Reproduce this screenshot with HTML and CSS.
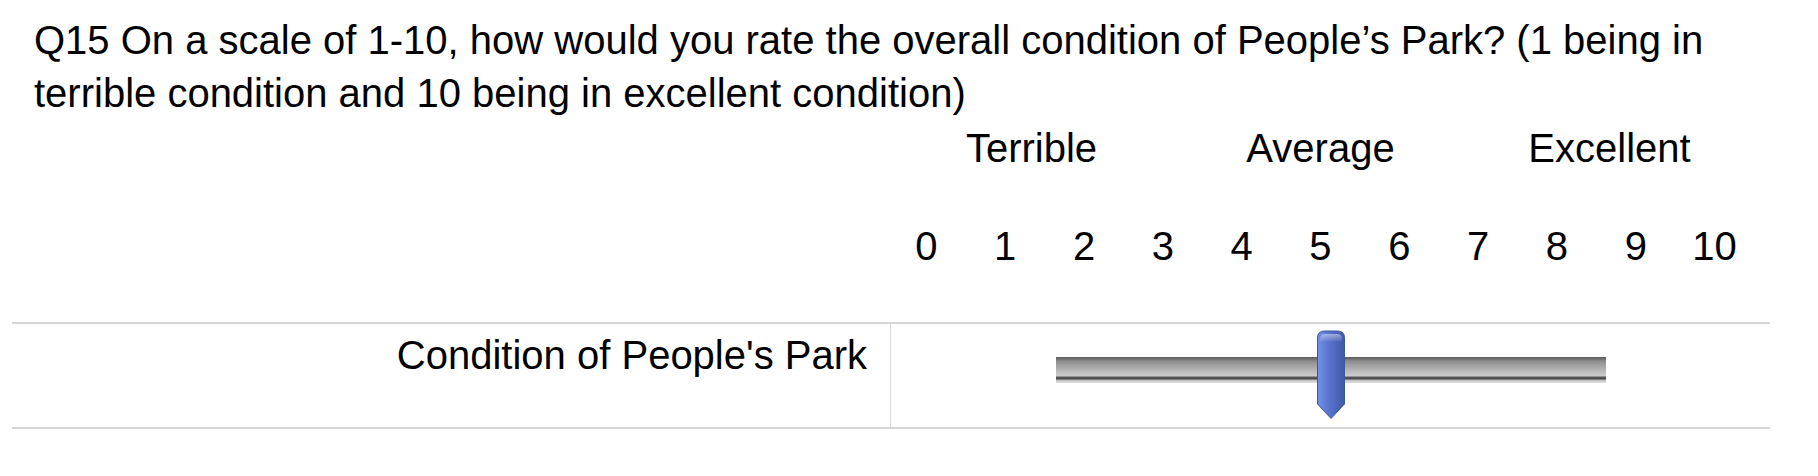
FILE: index.html
```html
<!DOCTYPE html>
<html>
<head>
<meta charset="utf-8">
<link rel="stylesheet" href="styles.css">
</head>
<body>
<div class="question">
  <div class="qtext">Q15 On a scale of 1-10, how would you rate the overall condition of People’s Park? (1 being in terrible condition and 10 being in excellent condition)</div>
  <div class="scale-head">
    <div class="spacer"></div>
    <div class="scale">
      <div class="anchors"><span>Terrible</span><span>Average</span><span>Excellent</span></div>
      <div class="nums"><span>0</span><span>1</span><span>2</span><span>3</span><span>4</span><span>5</span><span>6</span><span>7</span><span>8</span><span>9</span><span>10</span></div>
    </div>
  </div>
  <div class="row">
    <div class="row-label">Condition of People's Park</div>
    <div class="slider-cell">
      <div class="track">
        <svg class="handle" width="30" height="90" viewBox="0 0 30 90">
          <defs>
            <linearGradient id="hg" x1="0" y1="0" x2="1" y2="0">
              <stop offset="0" stop-color="#7590e4"/>
              <stop offset="0.35" stop-color="#5c78d2"/>
              <stop offset="1" stop-color="#3f59a6"/>
            </linearGradient>
            <linearGradient id="hl" x1="0" y1="0" x2="0" y2="1">
              <stop offset="0" stop-color="#ffffff" stop-opacity="0.45"/>
              <stop offset="1" stop-color="#ffffff" stop-opacity="0"/>
            </linearGradient>
          </defs>
          <path d="M1.5,8 Q1.5,1 8.5,1 H21.5 Q28.5,1 28.5,8 V74 L15,88.5 L1.5,74 Z" fill="url(#hg)" stroke="#3d56a0" stroke-width="1"/>
          <path d="M4,9 Q4,4 9,4 H21 Q26,4 26,9 V12 H4 Z" fill="url(#hl)"/>
        </svg>
      </div>
    </div>
  </div>
</div>
</body>
</html>
```

FILE: styles.css
```css
html, body {
  margin: 0;
  padding: 0;
  background: #ffffff;
}

body {
  font-family: "Liberation Sans", Arial, sans-serif;
  color: #000000;
  font-size: 40px;
  line-height: 53px;
}

.question {
  padding: 14px 0 0 12px;
  width: 1758px;
}

.qtext {
  padding-left: 22px;
  max-width: 1700px;
}

.scale-head {
  display: grid;
  grid-template-columns: 875px 867px;
  margin-top: 2px;
}

.anchors {
  display: grid;
  grid-template-columns: repeat(3, 1fr);
  text-align: center;
}

.nums {
  display: grid;
  grid-template-columns: repeat(11, 1fr);
  text-align: center;
  margin-top: 45px;
}

.row {
  display: grid;
  grid-template-columns: 879px 879px;
  margin-top: 49px;
  border-top: 2px solid #d6d6d6;
  border-bottom: 2px solid #d6d6d6;
  height: 103px;
}

.row-label {
  text-align: right;
  padding: 5px 23px 0 0;
  border-right: 1px solid #dadada;
}

.slider-cell {
  display: flex;
  justify-content: center;
  padding-top: 33px;
}

.track {
  position: relative;
  width: 550px;
  height: 26px;
  background: linear-gradient(to bottom,
    #5c5c5c 0px, #707070 2px, #8c8c8c 4px,
    #a8a8a8 10px, #c6c6c6 17px, #cbcbcb 19px,
    #5a5a5a 20px, #474747 22px, #bdbdbd 23px, #e2e2e2 26px);
}

.handle {
  position: absolute;
  left: 260px;
  top: -27px;
  display: block;
}
```
